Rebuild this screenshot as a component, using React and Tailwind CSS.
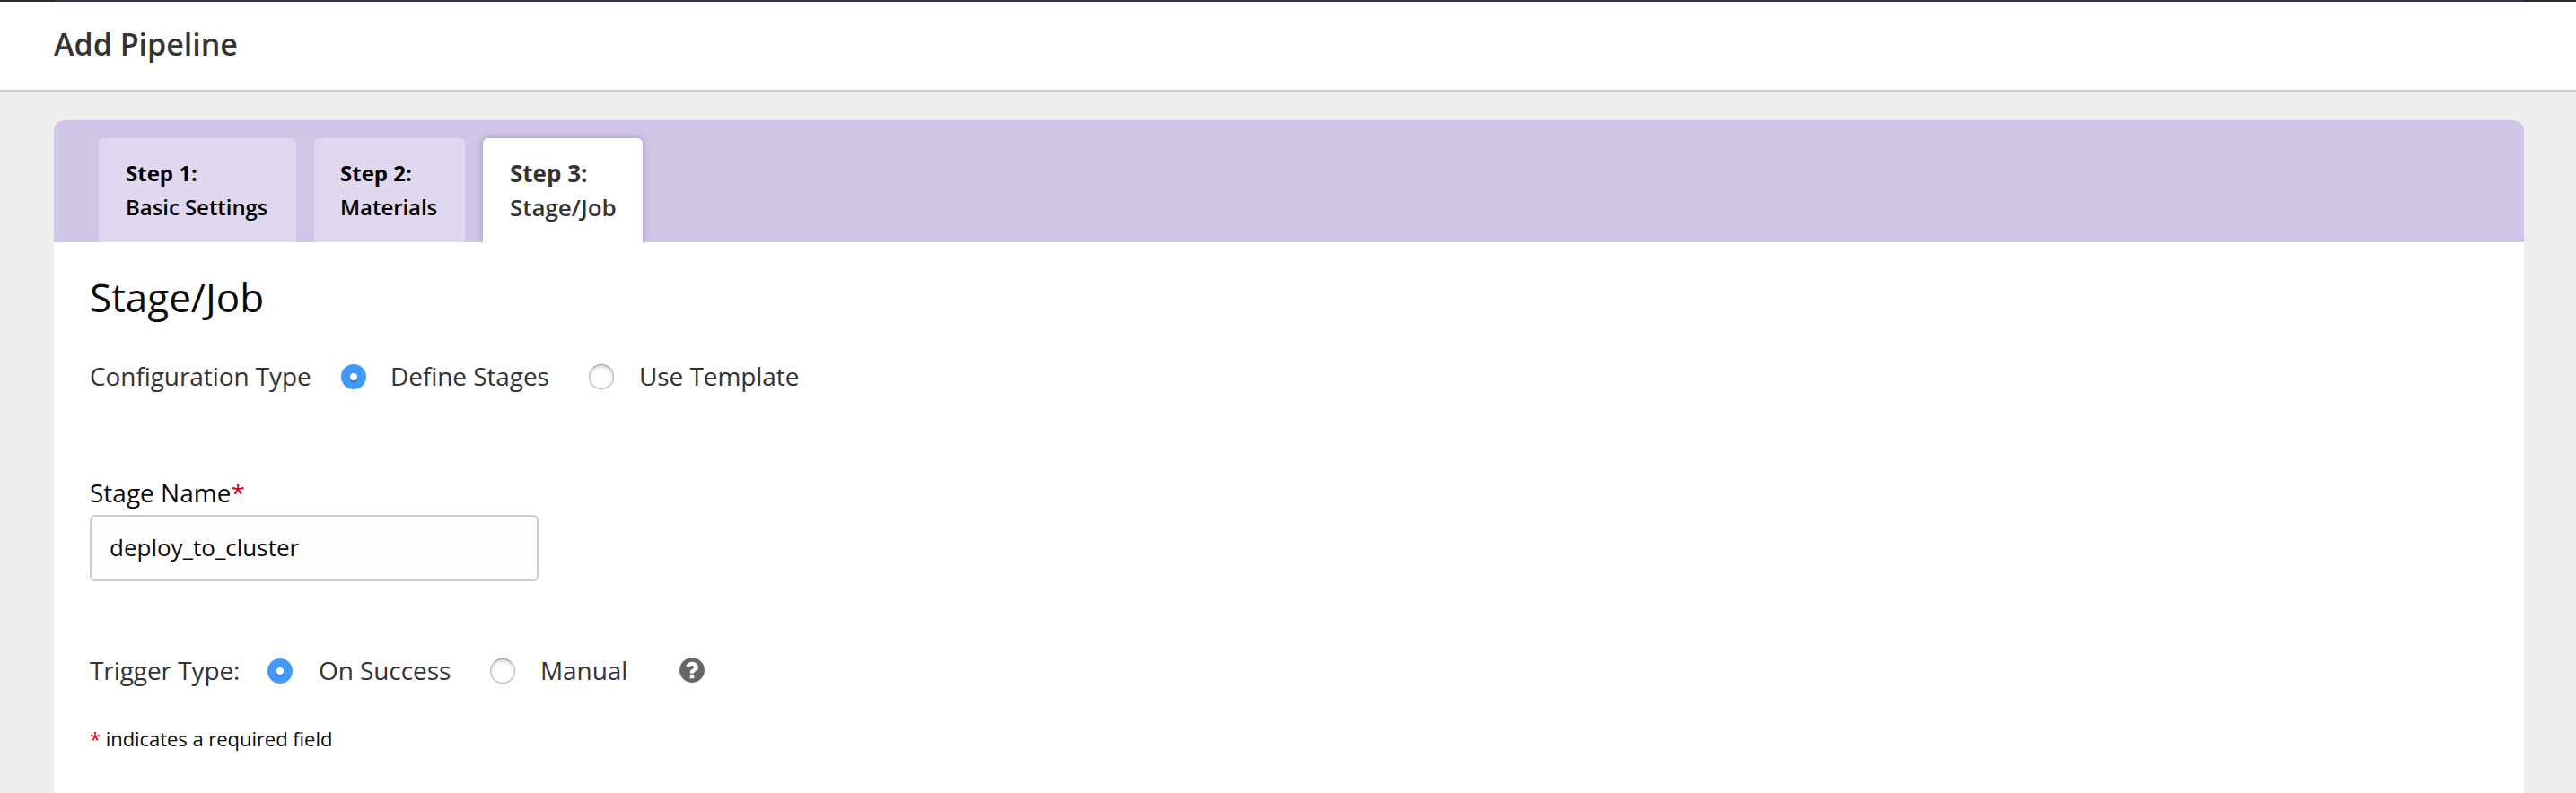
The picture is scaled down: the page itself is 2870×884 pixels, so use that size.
function Radio({ checked }) {
  return checked ? (
    <span className="mt-1.5 flex h-7 w-7 shrink-0 items-center justify-center rounded-full bg-[#4299f9]">
      <span className="h-2 w-2 rounded-full bg-white shadow-[0_2px_2px_rgba(0,0,0,0.25)]" />
    </span>
  ) : (
    <span className="mt-1.5 h-7 w-7 shrink-0 rounded-full border border-[#b0b0b0] border-t-[#959595] bg-white shadow-[inset_0_2px_4px_rgba(0,0,0,0.18)]" />
  );
}

function Tab({ step, name, width, active }) {
  return (
    <li
      className={`${width} h-[116px] shrink-0 whitespace-nowrap rounded-t-[6px] px-[30px] pt-5 leading-[38px] ${
        active
          ? "bg-white text-[26px] text-[#333] shadow-[0_0_8px_rgba(74,52,120,0.35)]"
          : "bg-[#e0d8ef] text-[24px] text-black"
      }`}
    >
      <div className="font-bold">{step}</div>
      <div className="font-semibold tracking-[-0.05px]">{name}</div>
    </li>
  );
}

function HelpIcon() {
  return (
    <svg className="mt-[5px] h-7 w-7 shrink-0" viewBox="0 128 1536 1536" fill="#666">
      <path d="M896 1376v-192q0-14-9-23t-23-9h-192q-14 0-23 9t-9 23v192q0 14 9 23t23 9h192q14 0 23-9t9-23zm256-672q0-88-55.5-163t-138.5-116-170-41q-243 0-371 213-15 24 8 42l132 100q7 6 19 6 16 0 25-12 53-68 86-92 34-24 86-24 48 0 85.5 26t37.5 59q0 38-20 61t-68 45q-63 28-115.5 86.5t-52.5 125.5v36q0 14 9 23t23 9h192q14 0 23-9t9-23q0-19 21.5-49.5t54.5-49.5q32-18 49-28.5t46-35 44.5-48 28-60.5 12.500-81zm384 192q0 209-103 385.5t-279.5 279.5-385.5 103-385.5-103-279.5-279.5-103-385.5 103-385.5 279.5-279.5 385.5-103 385.5 103 279.5 279.5 103 385.5z" />
    </svg>
  );
}

export default function App() {
  return (
    <div className="flex h-[884px] w-full flex-col overflow-hidden bg-[#eee] font-['Open_Sans',sans-serif] text-[#333]">
      <div className="flex h-[2px] shrink-0 justify-between bg-[#32304a]">
        <div className="w-[60px] bg-[#2d2a2a]" />
        <div className="w-[58px] bg-[#2d2a2a]" />
      </div>
      <header className="h-[100px] shrink-0 border-b-2 border-[#ccc] bg-white px-[60px]">
        <h1 className="text-[34px] font-semibold leading-[94px]">Add Pipeline</h1>
      </header>
      <main className="ml-[60px] mr-[58px] mt-8 flex grow flex-col">
        <ul className="flex h-[136px] shrink-0 gap-5 overflow-hidden rounded-t-[12px] bg-[#d1c6e8] pl-[50px] pt-5">
          <Tab step="Step 1:" name="Basic Settings" width="w-[220px]" />
          <Tab step="Step 2:" name="Materials" width="w-[168px] pl-[29px]" />
          <Tab step="Step 3:" name="Stage/Job" width="w-[178px]" active />
        </ul>
        <section className="grow bg-white px-10 pt-[31px] text-[28px] leading-[38px]">
          <h2 className="text-[44px] leading-[60px] text-[#0a0a0a]">Stage/Job</h2>
          <div className="mt-[39px] flex h-10 items-start whitespace-nowrap tracking-[-0.08px]">
            <div className="w-[280px]">Configuration Type</div>
            <Radio checked />
            <label className="ml-[27px] w-[221px]">Define Stages</label>
            <Radio />
            <label className="ml-[28px]">Use Template</label>
          </div>
          <div className="mt-[90px] text-[#0a0a0a]">
            Stage Name<span className="text-[#d0021b]">*</span>
          </div>
          <div className="mt-[6px] h-[74px] w-[500px] rounded-[6px] border-2 border-[#ccc] bg-[#fefefe] px-5 text-[26px] leading-[68px] text-[#0a0a0a]">
            deploy_to_cluster
          </div>
          <div className="mt-20 flex h-10 items-start whitespace-nowrap tracking-[-0.08px]">
            <div className="w-[198px]">Trigger Type:</div>
            <Radio checked />
            <label className="ml-[29px] w-[191px]">On Success</label>
            <Radio />
            <label className="ml-[28px] w-[155px]">Manual</label>
            <HelpIcon />
          </div>
          <p className="mt-10 text-[22px] leading-[30px] tracking-[-0.05px] text-[#0a0a0a]">
            <span className="text-[#d0021b]">*</span> indicates a required field
          </p>
        </section>
      </main>
    </div>
  );
}
